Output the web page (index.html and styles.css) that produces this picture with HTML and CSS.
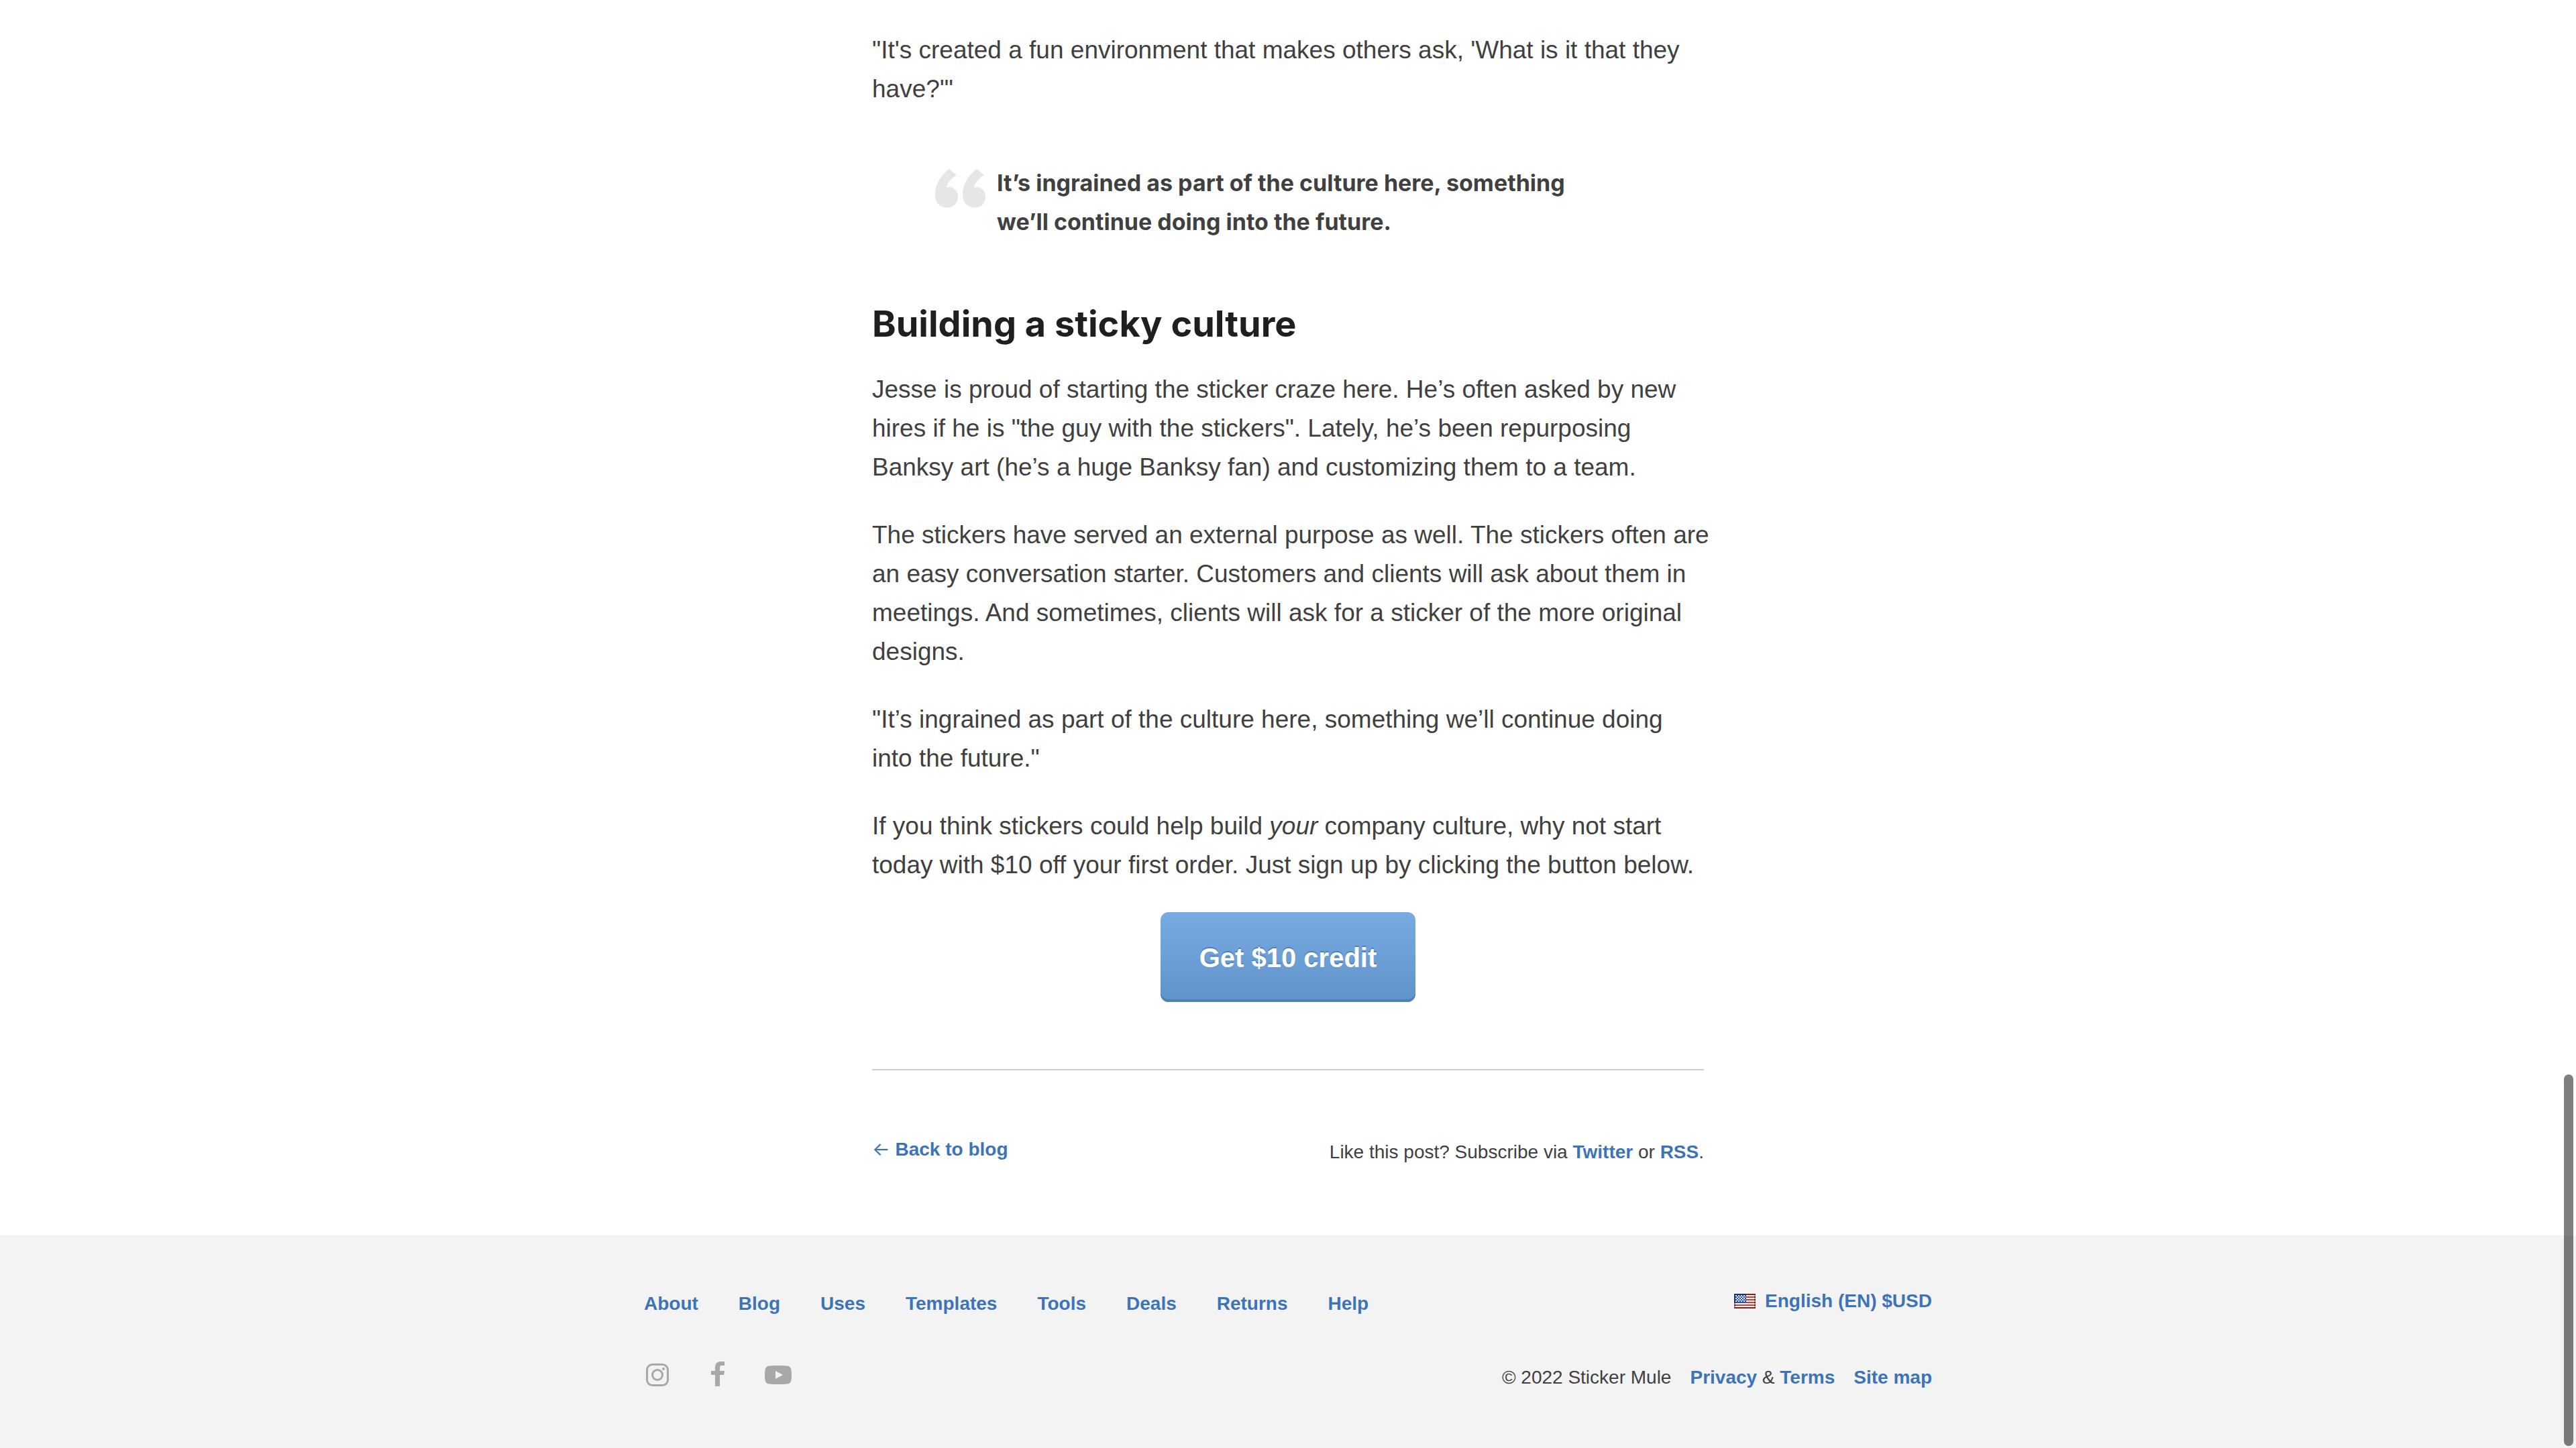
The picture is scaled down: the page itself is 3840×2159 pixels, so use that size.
FILE: index.html
```html
<!DOCTYPE html>
<html lang="en">
<head>
<meta charset="utf-8">
<title>Building a sticky culture - Sticker Mule</title>
<link rel="stylesheet" href="styles.css">
</head>
<body>
<main class="article">
  <p>"It's created a fun environment that makes others ask, 'What is it that they have?'"</p>
  <blockquote class="pullquote">
    <svg class="quote-mark" viewBox="0 0 76 58" aria-hidden="true"><path d="M21 0 32 9C24 14 18 21 17 27.500Q19 27 22 27C29 27.500 34 34 34 42 34 51 27 57.500 18 57.500 7 57.500 0 50 0 38 0 24 8 9 21 0Z"/><path d="M62 0 73 9C65 14 59 21 58 27.500Q60 27 63 27C70 27.500 75 34 75 42 75 51 68 57.500 59 57.500 48 57.500 41 50 41 38 41 24 49 9 62 0Z"/></svg>
    <p>It’s ingrained as part of the culture here, something we’ll continue doing into the future.</p>
  </blockquote>
  <h2>Building a sticky culture</h2>
  <p>Jesse is proud of starting the sticker craze here. He’s often asked by new<br>hires if he is "the guy with the stickers". Lately, he’s been repurposing<br>Banksy art (he’s a huge Banksy fan) and customizing them to a team.</p>
  <p>The stickers have served an external purpose as well. The stickers often are<br>an easy conversation starter. Customers and clients will ask about them in<br>meetings. And sometimes, clients will ask for a sticker of the more original<br>designs.</p>
  <p>"It’s ingrained as part of the culture here, something we’ll continue doing<br>into the future."</p>
  <p>If you think stickers could help build <em>your</em> company culture, why not start<br>today with $10 off your first order. Just sign up by clicking the button below.</p>
  <button class="cta" type="button">Get $10 credit</button>
  <div class="post-end">
    <a class="back" href="#"><span class="arrow">←</span> Back to blog</a>
    <p class="subscribe">Like this post? Subscribe via <a href="#">Twitter</a> or <a href="#">RSS</a>.</p>
  </div>
</main>
<footer class="footer">
  <div class="footer-inner">
    <div class="footer-row">
      <nav class="footer-nav">
        <a href="#">About</a><a href="#">Blog</a><a href="#">Uses</a><a href="#">Templates</a><a href="#">Tools</a><a href="#">Deals</a><a href="#">Returns</a><a href="#">Help</a>
      </nav>
      <a class="locale" href="#">
        <svg class="flag" viewBox="0 0 32 22" aria-hidden="true"><rect width="32" height="22" rx="1" fill="#fff"/><path fill="#d8392b" d="M0 0h32v2H0zM0 4h32v2H0zM0 8h32v2H0zM0 12h32v2H0zM0 16h32v2H0zM0 20h32v2H0z"/><path fill="#2a52be" d="M0 0h18v14H0z"/><path d="M2 3h15M4 5h13M2 7h15M4 9h13M2 11h15" stroke="#dfe6f7" stroke-width="2" stroke-dasharray="2 2"/><path d="M0 1h32M0 21h32M1 2v18M31 2v18" stroke="#000" stroke-opacity=".4" stroke-width="2" fill="none"/></svg>
        <span>English (EN) $USD</span>
      </a>
    </div>
    <div class="footer-row">
      <div class="social">
        <a href="#" aria-label="Instagram"><svg width="40" height="40" viewBox="0 0 40 40"><rect x="4.500" y="4.500" width="31" height="31" rx="8" fill="none" stroke="#a8a8a8" stroke-width="3"/><circle cx="20" cy="20" r="7.500" fill="none" stroke="#a8a8a8" stroke-width="3"/><circle cx="29" cy="11" r="2" fill="#a8a8a8"/></svg></a>
        <a href="#" aria-label="Facebook"><svg width="20" height="40" viewBox="0 0 20 40"><path fill="#a8a8a8" d="M20 0v6h-4q-3 0-3 3v5h7l-1 6h-6v17H6V20H0v-6h6V9Q6 0 15 0Z"/></svg></a>
        <a href="#" aria-label="YouTube"><svg width="40" height="40" viewBox="0 0 40 40"><path fill="#a8a8a8" fill-rule="evenodd" d="M7 6.500Q20 5.500 33 6.500 39 7 39.500 13 40.500 20 39.500 27 39 33 33 33.500 20 34.500 7 33.500 1 33 .5 27-.5 20 .5 13 1 7 7 6.500ZM16 14v12l11-6Z"/></svg></a>
      </div>
      <div class="legal">
        <span>© 2022 Sticker Mule</span>
        <span><a href="#">Privacy</a> &amp; <a href="#">Terms</a></span>
        <a href="#">Site map</a>
      </div>
    </div>
  </div>
</footer>
<div class="scroll-thumb" aria-hidden="true"></div>
</body>
</html>
```
FILE: styles.css
```css
* {
  box-sizing: border-box;
}

body {
  display: flex;
  flex-direction: column;
  min-height: 100vh;
  margin: 0;
  background: #fff;
  color: #404040;
  font-family: "Helvetica Neue", "Liberation Sans", Arial, sans-serif;
  font-size: 37px;
  line-height: 58px;
}

p {
  margin: 0 0 43px;
}

a {
  color: #3d74b6;
  font-weight: 700;
  text-decoration: none;
}

.article {
  width: 100%;
  max-width: 1240px;
  margin: 0 auto;
  padding: 46px 0 104px;
}

.article > p {
  margin-right: -16px;
}

.article > p:last-of-type {
  margin-bottom: 41px;
}

.pullquote {
  display: flex;
  gap: 16px;
  margin: 82px 94px 88px;
  font-family: "Proxima Nova", Inter, sans-serif;
  font-size: 34px;
  font-weight: 700;
}

.pullquote p {
  max-width: 880px;
  margin: 0;
}

.quote-mark {
  flex: none;
  width: 76px;
  height: 58px;
  margin-top: 8px;
  fill: #e6e6e6;
}

h2 {
  margin: 0 0 34px;
  color: #1f1f1f;
  font-family: "Proxima Nova", Inter, sans-serif;
  font-size: 54px;
  line-height: 70px;
}

.cta {
  display: block;
  width: 380px;
  height: 134px;
  margin: 0 auto;
  padding: 0;
  border: 0;
  border-radius: 12px;
  background: linear-gradient(#77abe1, #6193cb);
  box-shadow: inset 0 -4px #5180b3;
  color: #fff;
  font: 700 40px/136px "Helvetica Neue", "Liberation Sans", Arial, sans-serif;
  text-shadow: 0 -2px #5180b3;
}

.post-end {
  display: flex;
  justify-content: space-between;
  margin-top: 100px;
  padding-top: 98px;
  border-top: 2px solid #ccc;
  font-size: 28px;
  line-height: 40px;
}

.arrow {
  font-family: Inter, sans-serif;
  font-weight: 400;
  line-height: 1;
}

.subscribe {
  margin: 4px 0 0;
}

.footer {
  flex-grow: 1;
  padding: 76px 40px;
  background: #f3f3f3;
  font-size: 28px;
  line-height: 44px;
}

.footer-inner {
  display: flex;
  flex-direction: column;
  gap: 64px;
  max-width: 1920px;
  margin: 0 auto;
}

.footer-row {
  display: flex;
  justify-content: space-between;
  align-items: flex-start;
}

.footer-nav,
.locale,
.social,
.legal {
  display: flex;
  align-items: center;
}

.footer-nav {
  gap: 60px;
  padding-top: 4px;
}

.locale {
  gap: 14px;
}

.flag {
  width: 32px;
  height: 22px;
}

.social {
  gap: 60px;
}

.social a,
.social svg {
  display: block;
}

.legal {
  gap: 28px;
  padding-top: 2px;
}

.scroll-thumb {
  position: fixed;
  right: 4px;
  bottom: 3px;
  width: 14px;
  height: 554px;
  border-radius: 7px;
  background: rgba(0, 0, 0, 0.5);
}
```
